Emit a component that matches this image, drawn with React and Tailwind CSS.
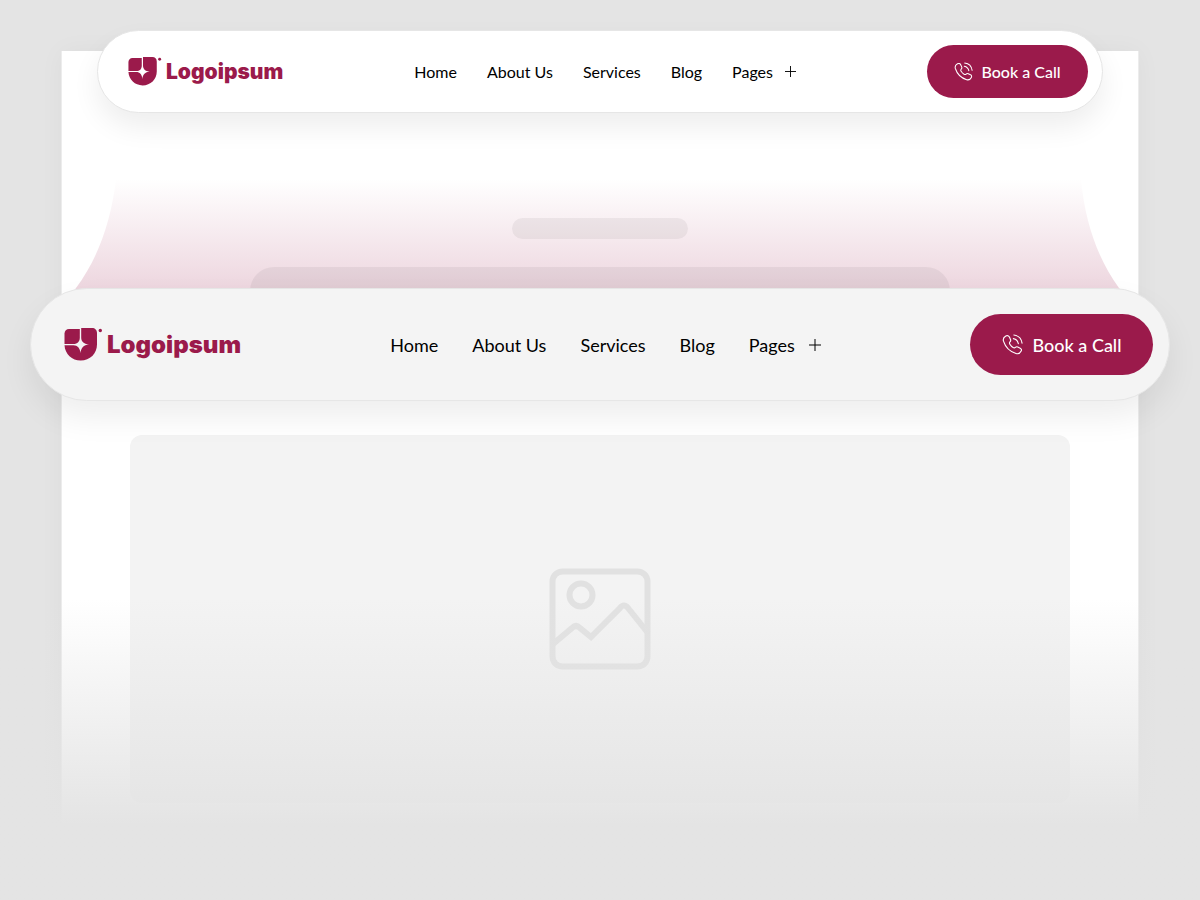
import React from 'react';
import clsx from 'clsx';

const links = ['Home', 'About Us', 'Services', 'Blog'];

const LogoMark = ({ className }) => (
  <svg viewBox="0 0 39 33" className={className} fill="#9b1a4b" aria-hidden="true">
    <path d="M5 1H15.800V9.500C15.800 13.500 13.500 16 9.500 16H0.500V5.500C0.500 3 2.500 1 5 1Z" />
    <path d="M17.200 0H28C31 0 33 2 33 5V16.500C33 25.500 26 32.500 16.700 32.500C8 32.500 1 26 0.500 17.200H9.500C13.500 17.200 16 20 16.500 25C17 20 19.500 17 25 16.500C19.500 16 17.200 13.500 17.200 9.500Z" />
    <circle cx="36.300" cy="2.500" r="1.700" />
  </svg>
);

const PhoneIcon = ({ className }) => (
  <svg viewBox="0 0 24 24" className={className} fill="none" stroke="currentColor" strokeWidth="1.3" strokeLinecap="round" strokeLinejoin="round" aria-hidden="true">
    <path d="M8.600 3.700L9.700 6.200C10.200 7.300 9.900 8.300 9.100 9.100C8.400 9.800 8.400 10.700 9 11.700C10 13.300 11.200 14.600 12.700 15.500C13.700 16.100 14.600 16 15.300 15.300C16 14.600 17 14.300 18 14.800L20.800 16.200C22.200 16.900 22.600 18.200 21.900 19.500C20.800 21.800 18.500 23 16 22.300C9.300 20.300 3.800 14.700 1.700 8.200C1 5.700 2.100 3.400 4.400 2.200C6 1.400 7.800 2 8.600 3.700Z" />
    <path d="M13 5.300C15.900 5.900 18.100 8.100 18.700 11" />
    <path d="M13.500 1.200C18.500 1.800 22.200 5.500 22.900 10.500" />
  </svg>
);

const PlusIcon = ({ className }) => (
  <svg viewBox="0 0 12 12" className={className} stroke="currentColor" strokeWidth="1" aria-hidden="true">
    <path d="M6 0V12M0 6H12" />
  </svg>
);

const PictureIcon = () => (
  <svg viewBox="0 0 102 102" className="size-[102px]" fill="none" stroke="#e1e1e1" strokeWidth="6" aria-hidden="true">
    <rect x="3.500" y="3.500" width="95" height="95" rx="10" />
    <circle cx="32" cy="27" r="11.500" />
    <path d="M4 76L23 60Q27 56 31 60L42 69L71 40Q75 35 79 40L99 65" />
  </svg>
);

const Backdrop = () => (
  <svg viewBox="0 0 1076 160" preserveAspectRatio="none" className="block h-40 w-full" aria-hidden="true">
    <defs>
      <linearGradient id="blush" x1="0" y1="0" x2="0" y2="1">
        <stop offset="0" stopColor="#9b1a4b" stopOpacity="0" />
        <stop offset="1" stopColor="#9b1a4b" stopOpacity="0.26" />
      </linearGradient>
    </defs>
    <path d="M54 0C49 44 35 81 14 109Q-10 140 -30 160H1106Q1084 140 1057 109C1036 80 1023 44 1019 0Z" fill="url(#blush)" />
  </svg>
);

const Navbar = ({ large }) => (
  <header
    className={clsx(
      'flex items-center justify-between rounded-full border border-[#e6e6e6]',
      large
        ? 'mx-[30px] h-[113px] bg-[#f4f4f4] pr-4 pl-[33px] shadow-[0_16px_32px_rgba(0,0,0,0.07)]'
        : 'mx-[97px] h-[83px] bg-white pr-3.5 pl-[30px] shadow-[0_14px_28px_rgba(0,0,0,0.07)]'
    )}
  >
    <a href="#home" className="flex items-center gap-1">
      <LogoMark className={large ? 'h-[33px] w-[39px]' : 'h-[29px] w-[34px]'} />
      <span
        className={clsx(
          "font-['Inter',sans-serif] font-black text-[#9b1a4b]",
          large ? 'text-2xl leading-8' : 'text-[21px] leading-7'
        )}
      >
        Logoipsum
      </span>
    </a>
    <nav
      aria-label={large ? 'Main, expanded' : 'Main'}
      className={clsx('flex items-center text-black', large ? 'gap-[34px] text-lg' : 'gap-[30px] text-base')}
    >
      {links.map((label) => (
        <a key={label} href="#page">{label}</a>
      ))}
      <button type="button" className={clsx('flex items-center', large ? 'gap-3.5' : 'gap-3')}>
        Pages
        <PlusIcon className={large ? 'size-3' : 'size-[11px]'} />
      </button>
    </nav>
    <button
      type="button"
      className={clsx(
        'flex items-center justify-center rounded-full bg-[#9b1a4b] font-medium text-white',
        large ? 'h-[61px] w-[183px] gap-2.5 text-lg' : 'h-[53px] w-[161px] gap-2 text-base'
      )}
    >
      <PhoneIcon className={large ? 'size-[21px]' : 'size-[19px]'} />
      Book a Call
    </button>
  </header>
);

const App = () => (
  <main className="grid min-h-screen bg-[#e4e4e4] font-['Lato',sans-serif]">
    <div className="col-start-1 row-start-1 mx-[61px] mt-[51px] mb-[75px] flex flex-col border-x border-[#ececec] bg-white shadow-[0_0_24px_rgba(0,0,0,0.04)]">
      <div className="mt-32 grid overflow-hidden">
        <div className="col-start-1 row-start-1">
          <Backdrop />
        </div>
        <div className="col-start-1 row-start-1 flex flex-col items-center pt-[39px]">
          <div className="h-[21px] w-44 rounded-full bg-black/5" />
          <div className="mt-7 h-[72px] w-[700px] max-w-full rounded-3xl bg-black/5" />
        </div>
      </div>
      <div className="mx-[68px] mt-24 flex h-[368px] items-center justify-center rounded-xl bg-[#f3f3f3]">
        <PictureIcon />
      </div>
    </div>
    <div className="pointer-events-none col-start-1 row-start-1 mt-[600px] bg-linear-to-b from-[#e4e4e4]/0 to-[#e4e4e4] to-[225px]" />
    <div className="col-start-1 row-start-1 flex flex-col gap-[175px] pt-[30px]">
      <Navbar />
      <Navbar large />
    </div>
  </main>
);

export default App;
